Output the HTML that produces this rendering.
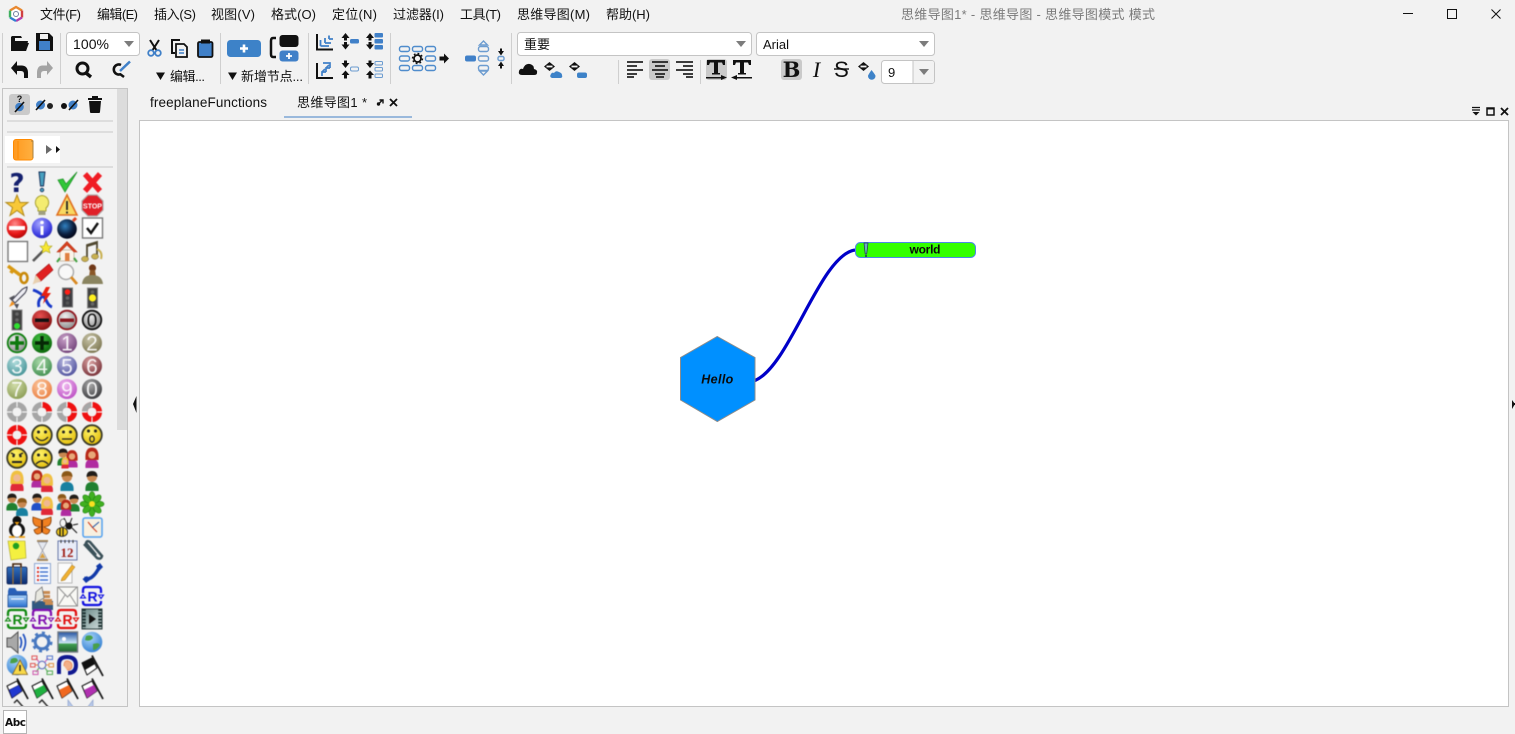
<!DOCTYPE html>
<html><head><meta charset="utf-8"><title>思维导图1*</title>
<style>
html,body{margin:0;padding:0;background:#f2f2f2;width:1515px;height:734px;overflow:hidden}
svg{position:absolute;left:0;top:0;display:block}
text{font-family:"Liberation Sans","Noto Sans CJK SC",sans-serif}
.m{font-size:13px;fill:#111}
.n{font-family:"Liberation Sans",sans-serif;font-size:21px;fill:#fff;text-anchor:middle;opacity:.9}
.soft{filter:blur(.4px)}
</style></head><body>
<svg width="1515" height="734" viewBox="0 0 1515 734" xmlns="http://www.w3.org/2000/svg">
<defs>
<radialGradient id="gRed" cx=".4" cy=".3" r=".8"><stop offset="0" stop-color="#ff8a8a"/><stop offset=".6" stop-color="#e81818"/><stop offset="1" stop-color="#a00000"/></radialGradient>
<radialGradient id="gBlue" cx=".4" cy=".3" r=".8"><stop offset="0" stop-color="#a8a8ff"/><stop offset=".7" stop-color="#3a3ae0"/><stop offset="1" stop-color="#20209a"/></radialGradient>
<radialGradient id="gDkRed" cx=".4" cy=".3" r=".8"><stop offset="0" stop-color="#e85050"/><stop offset="1" stop-color="#780808"/></radialGradient>
<radialGradient id="gGrey" cx=".4" cy=".3" r=".8"><stop offset="0" stop-color="#f0f0f0"/><stop offset="1" stop-color="#808080"/></radialGradient>
<radialGradient id="gGreen" cx=".4" cy=".3" r=".8"><stop offset="0" stop-color="#40c040"/><stop offset="1" stop-color="#045c04"/></radialGradient>
<radialGradient id="gYel" cx=".4" cy=".3" r=".8"><stop offset="0" stop-color="#fff46a"/><stop offset="1" stop-color="#e0b800"/></radialGradient>
<radialGradient id="gGlobe" cx=".4" cy=".3" r=".8"><stop offset="0" stop-color="#a8d4f8"/><stop offset="1" stop-color="#2a78d0"/></radialGradient>
<radialGradient id="gBomb" cx=".4" cy=".35" r=".7"><stop offset="0" stop-color="#3080c0"/><stop offset=".6" stop-color="#0c2040"/><stop offset="1" stop-color="#000010"/></radialGradient>
<radialGradient id="c1" cx=".4" cy=".3" r=".8"><stop offset="0" stop-color="#c8a0c8"/><stop offset="1" stop-color="#6a3a72"/></radialGradient>
<radialGradient id="c2" cx=".4" cy=".3" r=".8"><stop offset="0" stop-color="#c8c4a8"/><stop offset="1" stop-color="#76704a"/></radialGradient>
<radialGradient id="c3" cx=".4" cy=".3" r=".8"><stop offset="0" stop-color="#b0dcdc"/><stop offset="1" stop-color="#3e8e92"/></radialGradient>
<radialGradient id="c4" cx=".4" cy=".3" r=".8"><stop offset="0" stop-color="#a8d8a8"/><stop offset="1" stop-color="#3a8a4a"/></radialGradient>
<radialGradient id="c5" cx=".4" cy=".3" r=".8"><stop offset="0" stop-color="#b8b8e0"/><stop offset="1" stop-color="#484a98"/></radialGradient>
<radialGradient id="c6" cx=".4" cy=".3" r=".8"><stop offset="0" stop-color="#d8a0a0"/><stop offset="1" stop-color="#702830"/></radialGradient>
<radialGradient id="c7" cx=".4" cy=".3" r=".8"><stop offset="0" stop-color="#d0dca8"/><stop offset="1" stop-color="#86984e"/></radialGradient>
<radialGradient id="c8" cx=".4" cy=".3" r=".8"><stop offset="0" stop-color="#fcc8a0"/><stop offset="1" stop-color="#e87838"/></radialGradient>
<radialGradient id="c9" cx=".4" cy=".3" r=".8"><stop offset="0" stop-color="#f0b8f0"/><stop offset="1" stop-color="#b848c0"/></radialGradient>
<radialGradient id="c0" cx=".4" cy=".3" r=".8"><stop offset="0" stop-color="#a8a8a8"/><stop offset="1" stop-color="#303034"/></radialGradient>
<linearGradient id="gBrief" x1="0" y1="0" x2="0" y2="1"><stop offset="0" stop-color="#3070c0"/><stop offset="1" stop-color="#0c2c70"/></linearGradient>
<linearGradient id="gFold" x1="0" y1="0" x2="0" y2="1"><stop offset="0" stop-color="#a8d0f8"/><stop offset="1" stop-color="#2870d0"/></linearGradient>
<linearGradient id="gPic" x1="0" y1="0" x2="0" y2="1"><stop offset="0" stop-color="#2050a0"/><stop offset=".55" stop-color="#d0e8f8"/><stop offset=".6" stop-color="#40a050"/><stop offset="1" stop-color="#206030"/></linearGradient>
<linearGradient id="gFilm" x1="0" y1="0" x2="1" y2="1"><stop offset="0" stop-color="#6a8a88"/><stop offset="1" stop-color="#d0dcdc"/></linearGradient>
<linearGradient id="gBook" x1="0" y1="0" x2="1" y2="0"><stop offset="0" stop-color="#ff9a20"/><stop offset="1" stop-color="#ffb040"/></linearGradient>
<clipPath id="panel"><rect x="3" y="168" width="113" height="538"/></clipPath>

<g id="face"><circle r="9.8" fill="url(#gYel)" stroke="#3a3a28" stroke-width="1.8"/></g>
<g id="pers"><path d="M-6.500 10 Q-7.500 1 0 1 Q7.500 1 6.500 10Z" fill="#208030"/><circle cy="-4" r="5" fill="#c88850"/><path d="M-5.500-4 Q-5.500-10 0-10 Q5.500-10 5.500-4 Q2-6.500-5.500-4Z" fill="#201c18"/></g>
<g id="persT"><path d="M-6.500 10 Q-7.500 1 0 1 Q7.500 1 6.500 10Z" fill="#1880a0"/><circle cy="-4" r="5" fill="#c88850"/><path d="M-5.500-4 Q-5.500-10 0-10 Q5.500-10 5.500-4 Q2-6.500-5.500-4Z" fill="#8a5818"/></g>
<g id="persB"><path d="M-6.500 10 Q-7.500 1 0 1 Q7.500 1 6.500 10Z" fill="#2050c8"/><circle cy="-4" r="5" fill="#c88850"/><path d="M-5.500-4 Q-5.500-10 0-10 Q5.500-10 5.500-4 Q2-6.500-5.500-4Z" fill="#201c18"/></g>
<g id="womR"><path d="M-6.500 10 Q-7.500 1 0 1 Q7.500 1 6.500 10Z" fill="#b02ca0"/><path d="M-6.500 2 Q-7.500-10.500 0-10.500 Q7.500-10.500 6.500 2Z" fill="#b82818"/><circle cy="-3" r="3.800" fill="#e8a878"/></g>
<g id="womY"><path d="M-6.500 10 Q-7.500 1 0 1 Q7.500 1 6.500 10Z" fill="#e02838"/><path d="M-6.500 3 Q-7.500-10.500 0-10.500 Q7.500-10.500 6.500 3Z" fill="#f0c040"/><circle cy="-3" r="3.800" fill="#f0b890"/></g>
<g id="rShape" fill="none"><path d="M-6-9H6Q9-9 9-6V-3M9 5V6Q9 9 6 9H-6Q-9 9-9 6V5M-9-3V-6Q-9-9-6-9" stroke-width="2.300"/><path d="M-11.500 2H-6.500L-9-1.500Z M6.500-1H11.500L9 2.500Z" stroke-width="1.100"/></g>
<g id="flagF"><path d="M-10-2L0-7L5 3L-5 10Z" fill="#fff" stroke="#111" stroke-width="1" stroke-linejoin="round"/><path d="M0-9.500L11 11" stroke="#111" stroke-width="1.700"/></g>
</defs>

<!-- title bar -->
<g transform="translate(16,14)">
<path d="M0-7 L6-3.5 V3.5 L0 7 L-6 3.5 V-3.5Z" fill="#fff" stroke="none"/>
<path d="M-6-3.5 L0-7 L6-3.5" fill="none" stroke="#e88830" stroke-width="2.4"/>
<path d="M6-3.5 V3.5" stroke="#d04040" stroke-width="2.4"/>
<path d="M6 3.5 L0 7" stroke="#b040b0" stroke-width="2.4"/>
<path d="M0 7 L-6 3.5" stroke="#3080d0" stroke-width="2.4"/>
<path d="M-6 3.5 V-3.5" stroke="#40b060" stroke-width="2.4"/>
<circle r="2.5" fill="none" stroke="#7080a0" stroke-width="1"/>
</g>
<text class="m" x="40" y="19" textLength="41">文件(F)</text>
<text class="m" x="97" y="19" textLength="41">编辑(E)</text>
<text class="m" x="154" y="19" textLength="42">插入(S)</text>
<text class="m" x="211" y="19" textLength="44">视图(V)</text>
<text class="m" x="271" y="19" textLength="45">格式(O)</text>
<text class="m" x="332" y="19" textLength="45">定位(N)</text>
<text class="m" x="393" y="19" textLength="51">过滤器(I)</text>
<text class="m" x="460" y="19" textLength="41">工具(T)</text>
<text class="m" x="517" y="19" textLength="73">思维导图(M)</text>
<text class="m" x="606" y="19" textLength="44">帮助(H)</text>
<text x="901" y="19" font-size="13" fill="#7a7a7a" textLength="254">思维导图1* - 思维导图 - 思维导图模式 模式</text>
<path d="M1403 13.5H1413" stroke="#111" stroke-width="1"/>
<rect x="1447.5" y="9.5" width="9" height="9" fill="none" stroke="#111" stroke-width="1"/>
<path d="M1491.5 9.5L1500.5 18.5M1500.5 9.5L1491.5 18.5" stroke="#111" stroke-width="1"/>

<!-- separators -->
<g stroke="#cfcfcf" stroke-width="1">
<path d="M2.5 33V83M60.5 33V84M220.5 33V84M308.5 33V84M390.5 33V84M511.5 33V84M618.5 60V84M700.5 60V84"/>
</g>

<!-- open/save/undo/redo -->
<path d="M11 37V51H26L28 41H15V38H22L21 36H12Z" fill="#111"/><path d="M13 43H29L26 51H11Z" fill="#111"/>
<path d="M36 33H49L53 37V51H36Z" fill="#111"/><rect x="40" y="34" width="8" height="5" fill="#f2f2f2"/><rect x="39" y="41" width="11" height="9" fill="#4080c8"/>
<path d="M11 68L17 61V65.500H22Q28 66 28 73V78H24V74Q24 71 21 71H17V75Z" fill="#111"/>
<path d="M53 68L47 61V65.500H42Q37 66 37 73V78H41V74Q41 71 44 71H47V75Z" fill="#a4a4a4"/>
<!-- zoom combo -->
<rect x="66.500" y="32.500" width="73" height="23" rx="3" fill="#fff" stroke="#c4c4c4"/>
<text x="73" y="49" font-size="14" fill="#111" textLength="36">100%</text>
<path d="M124 41H134L129 47Z" fill="#7c7c7c"/>
<circle cx="82.500" cy="68.500" r="5.500" fill="none" stroke="#111" stroke-width="3"/><path d="M86 73L91 77" stroke="#111" stroke-width="3.400"/>
<path d="M121 65A5 5 0 1 0 121 74" fill="none" stroke="#111" stroke-width="2.600"/><path d="M120 71L130 61.500" stroke="#4080c8" stroke-width="2.500"/><path d="M120 74L124 77" stroke="#111" stroke-width="2.500"/>
<!-- cut copy paste -->
<path d="M150 40L157 51M159 40L152 51" stroke="#111" stroke-width="2"/><circle cx="151" cy="53" r="2.800" fill="none" stroke="#4080c8" stroke-width="1.800"/><circle cx="158" cy="53" r="2.800" fill="none" stroke="#4080c8" stroke-width="1.800"/>
<path d="M180 40H172V53H175" fill="none" stroke="#111" stroke-width="2"/><path d="M176 44H184L187 47V57H176Z" fill="#f2f2f2" stroke="#111" stroke-width="1.800"/><path d="M179 50H184M179 53H184" stroke="#4080c8" stroke-width="1.500"/>
<rect x="198" y="42" width="14.500" height="15" rx="1.500" fill="#4080c8" stroke="#111" stroke-width="1.800"/><rect x="201" y="39.500" width="9" height="4" fill="#111"/>
<path d="M156 72.500H165L160.500 80Z" fill="#111"/>
<text x="170" y="81" font-size="13" fill="#111" textLength="35">编辑...</text>
<!-- new node -->
<rect x="227" y="40" width="34" height="17" rx="3.500" fill="#3d82c8"/><path d="M244 44.500V52.500M240 48.500H248" stroke="#fff" stroke-width="2.600"/>
<path d="M276 38H273Q271 38 271 41V54Q271 57 273 57H276" fill="none" stroke="#111" stroke-width="2.500"/>
<rect x="279.500" y="35" width="19" height="12" rx="3" fill="#111"/><rect x="279.500" y="50.500" width="19" height="11" rx="3" fill="#4080c8"/><path d="M289 53V59M286 56H292" stroke="#fff" stroke-width="1.800"/>
<path d="M228 72.500H237L232.500 80Z" fill="#111"/>
<text x="241" y="81" font-size="13" fill="#111" textLength="62">新增节点...</text>
<!-- fold icons -->
<path d="M317 34V49.500H333" fill="none" stroke="#111" stroke-width="2"/>
<path d="M320.500 46V40M320.500 46H329M325 43V38M325 43H331M329 39V35.500M329 39H333" fill="none" stroke="#4080c8" stroke-width="1.800"/>
<path d="M317 63V78H333" fill="none" stroke="#111" stroke-width="2"/>
<path d="M322 76V72H326M322 72L325 69M326 72V68H330M326 68L329 65M330 68V63H323" fill="none" stroke="#4080c8" stroke-width="1.700"/>
<g fill="#111"><path d="M341.500 38L345.500 33L349.500 38H347V40.500H344V38ZM341.500 44.500L345.500 49.500L349.500 44.500H347V42H344V44.500Z"/>
<path d="M341.500 63L345.500 68L349.500 63H347V60.500H344V63ZM341.500 75L345.500 70.500L349.500 75H347V78.500H344V75Z"/>
<path d="M366 38L370 33L374 38H371.500V40.500H368.500V38ZM366 44.500L370 49.500L374 44.500H371.500V42H368.500V44.500Z"/>
<path d="M366 63L370 68L374 63H371.500V60.500H368.500V63ZM366 75L370 70.500L374 75H371.500V78.500H368.500V75Z"/></g>
<rect x="350" y="39" width="9" height="4.500" rx="1.500" fill="#4080c8"/>
<rect x="350.500" y="67" width="8" height="4" rx="1.500" fill="none" stroke="#6c9cd0"/>
<g fill="#4080c8"><rect x="374.500" y="33" width="8.500" height="4.500" rx="1"/><rect x="374.500" y="39" width="8.500" height="4.500" rx="1"/><rect x="374.500" y="45" width="8.500" height="4.500" rx="1"/></g>
<g fill="none" stroke="#6c9cd0"><rect x="375" y="61.500" width="7.500" height="3.500" rx="1"/><rect x="375" y="67.500" width="7.500" height="3.500" rx="1"/><rect x="375" y="74" width="7.500" height="3.500" rx="1"/></g>
<!-- layout -->
<g fill="none" stroke="#4f8ccc" stroke-width="1.400">
<rect x="399.500" y="46.500" width="10" height="5" rx="2"/><rect x="412.500" y="46.500" width="10" height="5" rx="2"/><rect x="425.500" y="46.500" width="10" height="5" rx="2"/>
<rect x="399.500" y="56" width="10" height="5" rx="2"/><rect x="425.500" y="56" width="10" height="5" rx="2"/>
<rect x="399.500" y="65.500" width="10" height="5" rx="2"/><rect x="412.500" y="65.500" width="10" height="5" rx="2"/><rect x="425.500" y="65.500" width="10" height="5" rx="2"/>
</g>
<circle cx="417.500" cy="58.500" r="3.500" fill="none" stroke="#111" stroke-width="1.800"/><circle cx="417.500" cy="58.500" r="5" fill="none" stroke="#111" stroke-width="1.400" stroke-dasharray="1.800 2.100"/>
<path d="M439.500 56.500H444V53.500L449 58.500L444 63.500V60.500H439.500Z" fill="#111"/>
<rect x="465" y="55.500" width="11" height="6" rx="2" fill="#4080c8"/>
<g fill="none" stroke="#6c9cd0" stroke-width="1.400"><rect x="478.500" y="46.500" width="10" height="5" rx="2"/><rect x="478.500" y="56" width="10" height="5" rx="2"/><rect x="478.500" y="65.500" width="10" height="5" rx="2"/><path d="M479.500 45L483.500 41L487.500 45Z"/><path d="M479.500 71L483.500 75L487.500 71Z"/><rect x="498" y="56.500" width="6" height="4" rx="1.500"/></g>
<path d="M498 51H500V48.500H502V51H504L501 55.500ZM498 66L501 61.500L504 66H502V68.500H500V66Z" fill="#111"/>
<!-- format combos -->
<rect x="517.500" y="32.500" width="234" height="23" rx="3" fill="#fff" stroke="#c4c4c4"/>
<text x="524" y="49" font-size="13" fill="#111">重要</text>
<path d="M736 41H746L741 47Z" fill="#7c7c7c"/>
<rect x="756.500" y="32.500" width="178" height="23" rx="3" fill="#fff" stroke="#c4c4c4"/>
<text x="763" y="49" font-size="13" fill="#111">Arial</text>
<path d="M919 41H929L924 47Z" fill="#7c7c7c"/>
<path d="M522 75Q518 75 519 71Q520 68 523 69Q525 63 530 64Q534 65 534 69Q538 70 537 73Q537 75 534 75Z" fill="#111"/>
<path d="M549.500 62L555 66.500L549.500 71L544 66.500Z" fill="#111"/><path d="M546.500 66.500H552.500" stroke="#f2f2f2" stroke-width="1.800"/>
<path d="M552 78Q549 77 551 74Q552 72 554 73Q556 70 559 72Q562 73 562 75Q563 78 560 78Z" fill="#3d82c8"/>
<path d="M574.500 62L580 66.500L574.500 71L569 66.500Z" fill="#111"/><path d="M571.500 66.500H577.500" stroke="#f2f2f2" stroke-width="1.800"/>
<rect x="577" y="72.500" width="10" height="5.500" rx="2" fill="#3d82c8"/>
<path d="M627 62H643M627 66H637M627 70H643M627 74H637M627 77H634" stroke="#222" stroke-width="1.700"/>
<rect x="649" y="59" width="21" height="21" rx="3" fill="#cacaca"/>
<path d="M652 62H668M655 66H665M652 70H668M655 74H665M656 77H664" stroke="#222" stroke-width="1.700"/>
<path d="M676 62H693M683 66H693M676 70H693M683 74H693M686 77H693" stroke="#222" stroke-width="1.700"/>
<rect x="706" y="59" width="21" height="21" rx="3" fill="#cacaca"/>
<path d="M707 60H725V65H723L722 62.500H718V73H720V74.500H712V73H714V62.500H710L709 65H707Z" fill="#111"/>
<path d="M706 77H721V75L727 77.500L721 80V78.500H706Z" fill="#111"/>
<path d="M733 60H751V65H749L748 62.500H744V73H746V74.500H738V73H740V62.500H736L735 65H733Z" fill="#111"/>
<path d="M752 77H737V75L731 77.500L737 80V78.500H752Z" fill="#111"/>
<rect x="781" y="59" width="21" height="21" rx="3" fill="#cacaca"/>
<text x="791.500" y="77" font-size="21" font-weight="700" text-anchor="middle" style="font-family:'DejaVu Serif','Liberation Serif',serif" fill="#111">B</text>
<text x="816.500" y="77" font-size="22" font-style="italic" text-anchor="middle" style="font-family:'Liberation Serif',serif" fill="#111">I</text>
<text x="841.500" y="77" font-size="22" text-anchor="middle" style="font-family:'Liberation Sans',sans-serif" fill="#111">S</text><path d="M834 69H849" stroke="#111" stroke-width="1.400"/>
<path d="M863.500 62L869 66.500L863.500 71L858 66.500Z" fill="#111"/><path d="M860.500 66.500H866.500" stroke="#f2f2f2" stroke-width="1.800"/>
<path d="M871.500 70Q875.500 75 875.500 76A3.700 3.700 0 0 1 868 76Q868 75 871.500 70Z" fill="#3d82c8"/>
<rect x="881.500" y="60.500" width="53" height="23" rx="3" fill="#fff" stroke="#c4c4c4"/><rect x="913" y="61" width="21" height="22" rx="2" fill="#f2f2f2"/><path d="M913 60.500V83.500" stroke="#c4c4c4"/>
<text x="888" y="77" font-size="13" fill="#111">9</text>
<path d="M919 69H929L924 75Z" fill="#7c7c7c"/>

<!-- tabs -->
<text x="150" y="107" font-size="13.500" fill="#111" textLength="117">freeplaneFunctions</text>
<text x="297" y="107" font-size="13" fill="#111" textLength="70">思维导图1 *</text>
<path d="M378 104.500L382 100.500M379.500 100H383V103.500" stroke="#111" stroke-width="1.400" fill="none"/><circle cx="378.500" cy="104" r="1.700" fill="#111"/>
<path d="M390 99L397 106M397 99L390 106" stroke="#111" stroke-width="1.800"/>
<rect x="284" y="116" width="128" height="2" fill="#9ab9dc"/>
<!-- dock icons -->
<path d="M1472 107.500H1480M1472 110H1480" stroke="#111" stroke-width="1.300"/><path d="M1472.500 112H1479.500L1476 115.500Z" fill="#111"/>
<rect x="1487" y="108" width="7" height="7" fill="none" stroke="#111" stroke-width="1.500"/><path d="M1487 108.500H1494" stroke="#111" stroke-width="2"/>
<path d="M1501 108L1508 115M1508 108L1501 115" stroke="#111" stroke-width="1.800"/>

<!-- canvas -->
<rect x="139.500" y="120.500" width="1369" height="586" fill="#fff" stroke="#c4c4c4"/>
<path d="M755 380.500C790 366 820 255 855 250" fill="none" stroke="#0000c8" stroke-width="3.200"/>
<path d="M717.300 336.500L755 357.500V400L717.300 421.500L680.500 400V357.500Z" fill="#0090ff" stroke="#8c8c8c" stroke-width="1"/>
<text x="717.300" y="383.500" font-size="12.500" font-weight="700" font-style="italic" text-anchor="middle" fill="#0a0a0a" textLength="32">Hello</text>
<rect x="855.500" y="242.500" width="120" height="15" rx="5" fill="#33ff00" stroke="#4c88e8" stroke-width="1"/>
<text x="925" y="253.500" font-size="12" font-weight="700" text-anchor="middle" fill="#0a0a0a" textLength="31">world</text>
<path d="M864 243H868L866.700 254H865.200Z" fill="#6ab0c0" stroke="#203050" stroke-width=".7"/><circle cx="866" cy="256" r="1" fill="#203050"/>

<!-- collapse arrows -->
<path d="M136.500 396L133 404L136.500 413Z" fill="#111"/><path d="M1512 400L1515 404L1512 409Z" fill="#111"/><rect x="1513" y="403" width="2" height="2" fill="#111"/>

<!-- left panel -->
<rect x="2.500" y="88.500" width="125" height="618" fill="#f2f2f2" stroke="#c4c4c4"/>
<rect x="117" y="89" width="10" height="341" fill="#dcdcdc"/>
<rect x="9" y="94" width="21" height="21" rx="3" fill="#cacaca"/>
<text x="19.500" y="102" font-size="9" font-weight="700" text-anchor="middle" fill="#111">?</text>
<circle cx="19.500" cy="107" r="4.300" fill="#4080c8"/><path d="M15 112L24 102" stroke="#111" stroke-width="1.600"/>
<circle cx="40.500" cy="105" r="4.500" fill="#4080c8"/><path d="M36 110L45 100" stroke="#111" stroke-width="1.600"/><circle cx="50" cy="106" r="3" fill="#222"/>
<circle cx="73" cy="105" r="4.500" fill="#4080c8"/><path d="M69 110L78 100" stroke="#111" stroke-width="1.600"/><circle cx="64" cy="106" r="3" fill="#111"/>
<path d="M88 98H102V100H88ZM92 96H98V98H92ZM89 101H101L100 112Q100 113 99 113H91Q90 113 90 112Z" fill="#111"/>
<path d="M7 121H113M7 132H113M7 167H113" stroke="#c8c8c8" stroke-width="1"/>
<rect x="5" y="136" width="55" height="27" fill="#fff"/>
<rect x="13.500" y="139.500" width="19.500" height="20.500" rx="2.500" fill="url(#gBook)" stroke="#ff8a00"/><path d="M18 141V159" stroke="#ff8a00" stroke-width="1"/><path d="M31 141H33V158" fill="none" stroke="#a88040"/>
<path d="M46 145L52 149.500L46 154Z" fill="#6a6a6a"/><path d="M56 146L60 149.500L56 153Z" fill="#111"/>

<g clip-path="url(#panel)"><g class="soft">
<!-- row 0 -->
<text x="17" y="192" font-size="26" font-weight="700" text-anchor="middle" style="font-family:'DejaVu Sans',sans-serif" fill="#14206e">?</text>
<path d="M39 172H45L43.500 186H40.500Z" fill="#48a0c0" stroke="#14305a" stroke-width="1"/><circle cx="42" cy="190" r="1.800" fill="#48a0c0" stroke="#14305a" stroke-width=".8"/>
<path d="M58 180L65 192L77 172L66 184L63 179Z" fill="#30c838" stroke="#209028" stroke-width=".8"/>
<path d="M85 174L100 191M100 174L85 191" stroke="#f01c24" stroke-width="5.500"/>
<!-- row 1 -->
<path d="M17 195L20 202.500H28L21.500 207.500L24 215.500L17 210.500L10 215.500L12.500 207.500L6 202.500H14Z" fill="#f8c838" stroke="#b08818"/>
<path d="M42 195.500A7 7 0 0 1 46 208V211H38V208A7 7 0 0 1 42 195.500Z" fill="#f4ec70" stroke="#a8a030"/><rect x="38.500" y="211" width="7" height="4" fill="#a0a080"/>
<path d="M67 195L77 215H57Z" fill="#f8d860" stroke="#e07020" stroke-width="1.600"/><path d="M67 201V210M67 211.500V213.500" stroke="#222" stroke-width="1.800"/>
<path d="M88 195H97L103 201V210L97 216H88L82 210V201Z" fill="#e02028" stroke="#b0a8a8" stroke-width="1.200"/><text x="92.500" y="208.500" font-size="7" font-weight="700" text-anchor="middle" fill="#fff">STOP</text>
<!-- row 2 -->
<circle cx="17" cy="228" r="10.300" fill="url(#gRed)"/><rect x="9" y="226" width="16" height="4" fill="#fff"/>
<circle cx="42" cy="228" r="10.300" fill="url(#gBlue)"/><rect x="40.500" y="226" width="3" height="9" fill="#fff"/><circle cx="42" cy="222.500" r="1.800" fill="#fff"/>
<circle cx="67" cy="229" r="9.800" fill="url(#gBomb)"/><path d="M73 221L76 218" stroke="#e04020" stroke-width="3"/>
<rect x="82.500" y="218" width="20" height="20" fill="#fff" stroke="#707070" stroke-width="1.300"/><path d="M87 228L91 233L98 223" fill="none" stroke="#111" stroke-width="2.400"/>
<!-- row 3 -->
<rect x="8" y="241.500" width="19.500" height="20" fill="#fff" stroke="#707070" stroke-width="1.300"/>
<path d="M33 261L45 249" stroke="#555" stroke-width="2.600"/><path d="M46 241L48 246H52L49 249L50 253L46 251L42 253L43 249L40 246H44Z" fill="#f8e830" stroke="#a8a020" stroke-width=".6"/>
<rect x="60" y="250" width="14" height="11" fill="#fbf4ea" stroke="#b8a890" stroke-width=".7"/><path d="M67 241.500L57 252H60L67 245L74 252H77Z" fill="#d84020" stroke="#b83010" stroke-width=".6"/><rect x="65" y="253" width="4.500" height="8" fill="#e08040"/><path d="M57 262L60 258M77 262L74 258" stroke="#40a040" stroke-width="2"/>
<path d="M87 259V245L97 242V256" fill="none" stroke="#504830" stroke-width="1.800"/><path d="M87 246L97 243" stroke="#504830" stroke-width="2"/><ellipse cx="85" cy="259" rx="3.500" ry="2.700" fill="#c8b050" stroke="#706030" stroke-width=".5"/><ellipse cx="95" cy="256.500" rx="3.500" ry="2.700" fill="#c8b050" stroke="#706030" stroke-width=".5"/><path d="M97 249Q103 252 101 259" fill="none" stroke="#c8b050" stroke-width="2"/>
<!-- row 4 -->
<path d="M8 266L20 275" stroke="#d89810" stroke-width="3.500"/><path d="M10 271L13 273" stroke="#d89810" stroke-width="2.500"/><ellipse cx="24" cy="278" rx="3.500" ry="5" fill="none" stroke="#c88808" stroke-width="2.600"/>
<path d="M34 283L36 275L49 264L53 270L41 281Z" fill="#e02020" stroke="#a01010" stroke-width=".6"/><path d="M32.500 284.500L36 275L41 281Z" fill="#e8d0b0"/>
<circle cx="66" cy="272" r="7.500" fill="#f8f8f8" stroke="#a8a8a8" stroke-width="1.400"/><path d="M71 277L77 284" stroke="#d88820" stroke-width="2.800"/>
<circle cx="92.500" cy="268" r="3.600" fill="#703818"/><path d="M90 270L89 277H96L95 270Z" fill="#8a5828"/><path d="M82 284Q83 275 92 275Q102 275 103 284Z" fill="#8a8460"/>
<!-- row 5 -->
<path d="M12 300L22 289.500Q25 287.500 27 287Q27 290 25 293L15 303Z" fill="#eeeef4" stroke="#404050" stroke-width="1.100"/><path d="M9 307L12 301L15 304Z" fill="#f09020"/><path d="M9 298L15 295L12 301ZM19 304L17 309L14 304Z" fill="#505058"/>
<path d="M33 290Q43 293 47 302Q49 306 52 307" fill="none" stroke="#1838c8" stroke-width="3"/><path d="M43 296Q37 300 39 307" fill="none" stroke="#1838c8" stroke-width="2.800"/><path d="M46 287L41 296H45L43 304L51 293H47L50 287Z" fill="#e82010"/>
<rect x="62.500" y="288" width="10" height="19" fill="#3c3c40" stroke="#777"/><circle cx="67.500" cy="292" r="2.800" fill="#ff2018"/><circle cx="67.500" cy="298" r="1.800" fill="#666"/><circle cx="67.500" cy="303" r="1.800" fill="#555"/>
<rect x="87.500" y="288" width="10" height="20" fill="#404040" stroke="#888"/><circle cx="92.500" cy="292" r="1.800" fill="#666"/><circle cx="92.500" cy="298" r="3.600" fill="#fff020"/><circle cx="92.500" cy="304" r="1.800" fill="#666"/>
<!-- row 6 -->
<rect x="12" y="310" width="10" height="20" fill="#404040" stroke="#888"/><circle cx="17" cy="314" r="1.800" fill="#666"/><circle cx="17" cy="320" r="1.800" fill="#666"/><circle cx="17" cy="326" r="3" fill="#30e030"/>
<circle cx="42" cy="320" r="10" fill="url(#gDkRed)"/><rect x="35" y="318.500" width="14" height="3.500" fill="#111"/>
<circle cx="67" cy="320" r="9.300" fill="url(#gGrey)" stroke="#901820" stroke-width="1.800"/><rect x="60" y="318.500" width="14" height="3.500" fill="#8a1820"/>
<circle cx="92" cy="320" r="9.300" fill="url(#gGrey)" stroke="#111" stroke-width="1.800"/><text x="92" y="327" font-size="19" text-anchor="middle" fill="#111">0</text>
<!-- row 7 -->
<circle cx="17" cy="343" r="9.300" fill="url(#gGrey)" stroke="#108010" stroke-width="1.800"/><path d="M17 336V350M10 343H24" stroke="#0c780c" stroke-width="3.400"/>
<circle cx="42" cy="343" r="10" fill="url(#gGreen)"/><path d="M42 336V350M35 343H49" stroke="#062806" stroke-width="3.400"/>
<circle cx="67" cy="343" r="10" fill="url(#c1)"/><text class="n" x="67" y="350.500">1</text>
<circle cx="92" cy="343" r="10" fill="url(#c2)"/><text class="n" x="92" y="350.500">2</text>
<!-- row 8 -->
<circle cx="17" cy="366" r="10" fill="url(#c3)"/><text class="n" x="17" y="373.500">3</text>
<circle cx="42" cy="366" r="10" fill="url(#c4)"/><text class="n" x="42" y="373.500">4</text>
<circle cx="67" cy="366" r="10" fill="url(#c5)"/><text class="n" x="67" y="373.500">5</text>
<circle cx="92" cy="366" r="10" fill="url(#c6)"/><text class="n" x="92" y="373.500">6</text>
<!-- row 9 -->
<circle cx="17" cy="389" r="10" fill="url(#c7)"/><text class="n" x="17" y="396.500">7</text>
<circle cx="42" cy="389" r="10" fill="url(#c8)"/><text class="n" x="42" y="396.500">8</text>
<circle cx="67" cy="389" r="10" fill="url(#c9)"/><text class="n" x="67" y="396.500">9</text>
<circle cx="92" cy="389" r="10" fill="url(#c0)"/><text class="n" x="92" y="396.500">0</text>
<!-- row 10 rings -->
<g fill="none" stroke-width="5.500">
<circle cx="17" cy="412" r="7.300" stroke="#a6a6a6"/>
<circle cx="42" cy="412" r="7.300" stroke="#a6a6a6"/><path d="M42 404.700A7.300 7.300 0 0 1 49.300 412" stroke="#f01010"/>
<circle cx="67" cy="412" r="7.300" stroke="#a6a6a6"/><path d="M67 404.700A7.300 7.300 0 0 1 67 419.300" stroke="#f01010"/>
<circle cx="92" cy="412" r="7.300" stroke="#f01010"/><path d="M92 404.700A7.300 7.300 0 0 0 84.700 412" stroke="#a6a6a6"/>
<circle cx="17" cy="435" r="7.300" stroke="#f01010"/>
</g>
<g stroke="#f2f2f2" stroke-width="1.200">
<path d="M17 402V407M17 417V422M7 412H12M22 412H27M42 402V407M42 417V422M32 412H37M47 412H52M67 402V407M67 417V422M57 412H62M72 412H77M92 402V407M92 417V422M82 412H87M97 412H102M17 425V430M17 440V445M7 435H12M22 435H27"/>
</g>
<!-- faces -->
<use href="#face" x="42" y="435"/><circle cx="38.500" cy="432" r="1.500" fill="#222"/><circle cx="45.500" cy="432" r="1.500" fill="#222"/><path d="M36 437Q42 444 48 437" fill="none" stroke="#222" stroke-width="1.300"/>
<use href="#face" x="67" y="435"/><circle cx="63.500" cy="432" r="1.500" fill="#222"/><circle cx="70.500" cy="432" r="1.500" fill="#222"/><path d="M62 439H72" stroke="#222" stroke-width="1.300"/>
<use href="#face" x="92" y="435"/><circle cx="88.500" cy="431" r="1.500" fill="#222"/><circle cx="95.500" cy="431" r="1.500" fill="#222"/><ellipse cx="92" cy="439" rx="2.200" ry="3" fill="none" stroke="#222" stroke-width="1.200"/>
<!-- row 12 -->
<use href="#face" x="17" y="458"/><path d="M11 453L15 455M23 453L19 455" stroke="#222" stroke-width="1.300"/><circle cx="13.500" cy="456" r="1.300" fill="#222"/><circle cx="20.500" cy="456" r="1.300" fill="#222"/><path d="M12 462H22" stroke="#222" stroke-width="2"/>
<use href="#face" x="42" y="458"/><circle cx="38.500" cy="455" r="1.500" fill="#222"/><circle cx="45.500" cy="455" r="1.500" fill="#222"/><path d="M36 464Q42 458 48 464" fill="none" stroke="#222" stroke-width="1.300"/>
<use href="#pers" transform="translate(63,457) scale(.85)"/><use href="#womR" transform="translate(72,459) scale(.85)"/><use href="#womY" transform="translate(65,463) scale(.55)"/>
<use href="#womR" x="92" y="458"/>
<!-- row 13 -->
<use href="#womY" x="17" y="481"/>
<use href="#womR" transform="translate(37,479) scale(.85)"/><use href="#womY" transform="translate(47,483) scale(.9)"/>
<use href="#persT" x="67" y="481"/>
<use href="#pers" x="92" y="481"/>
<!-- row 14 -->
<use href="#pers" transform="translate(12,502) scale(.85)"/><use href="#persT" transform="translate(22,507) scale(.9)"/>
<use href="#persB" transform="translate(37,502) scale(.85)"/><use href="#womY" transform="translate(47,506) scale(.9)"/>
<use href="#persT" transform="translate(62,502) scale(.8)"/><use href="#pers" transform="translate(74,503) scale(.85)"/><use href="#womR" transform="translate(66,508) scale(.8)"/>
<g fill="#40b020" stroke="#208010" stroke-width=".6"><ellipse cx="92" cy="497" rx="3" ry="5.500"/><ellipse cx="92" cy="511" rx="3" ry="5.500"/><ellipse cx="85.500" cy="504" rx="5.500" ry="3"/><ellipse cx="98.500" cy="504" rx="5.500" ry="3"/><ellipse cx="87" cy="499" rx="3" ry="5" transform="rotate(-45 87 499)"/><ellipse cx="97" cy="499" rx="3" ry="5" transform="rotate(45 97 499)"/><ellipse cx="87" cy="509" rx="3" ry="5" transform="rotate(45 87 509)"/><ellipse cx="97" cy="509" rx="3" ry="5" transform="rotate(-45 97 509)"/></g><circle cx="92" cy="504" r="3" fill="#f8e020"/>
<!-- row 15 -->
<ellipse cx="17" cy="530" rx="8" ry="7.500" fill="#111"/><ellipse cx="17" cy="531" rx="5" ry="6" fill="#fff"/><circle cx="17" cy="520.500" r="4.500" fill="#111"/><path d="M14.500 522H19.500L17 525Z" fill="#f0a010"/><path d="M9 537H15M19 537H25" stroke="#f0a010" stroke-width="1.800"/>
<path d="M42 520L33 517Q32 524 36 526L40 527L34 530Q36 537 42 532Q48 537 50 530L44 527L48 526Q52 524 51 517Z" fill="#f08020" stroke="#8a4008" stroke-width=".8"/><path d="M42 520V532" stroke="#401808" stroke-width="1.400"/>
<ellipse cx="62" cy="532" rx="5.500" ry="4.500" fill="#f0c820" stroke="#111" stroke-width=".8"/><path d="M60 528V536M63 528V536" stroke="#111" stroke-width="1.200"/><circle cx="69" cy="526" r="3.500" fill="#111"/><path d="M64 518Q66 522 67 524M72 518L70 523M72 528L77 533M73 525L78 524" stroke="#111" stroke-width="1"/><ellipse cx="63" cy="523" rx="3" ry="4" fill="#f4f4f4" stroke="#222" stroke-width=".6"/>
<rect x="83" y="518" width="19" height="19" rx="2" fill="#f8f0e0" stroke="#50a0f0" stroke-width="1.500"/><path d="M92.500 527.500L88 522M92.500 527.500L97 532" stroke="#d04020" stroke-width="1.100"/><path d="M92.500 527.500L99 522" stroke="#2050a0" stroke-width="1"/>
<!-- row 16 -->
<path d="M8 541L25 541L26 558L11 560Z" fill="#f4f040" stroke="#a8a020" stroke-width=".6"/><circle cx="16" cy="546" r="3.200" fill="#20a020"/>
<path d="M37 541H48M37 560H48" stroke="#a08050" stroke-width="1.800"/><path d="M38 542H47L42.500 550.500L47 559H38L42.500 550.500Z" fill="#e4e8f0" stroke="#90909a" stroke-width=".7"/><path d="M39.500 558H45.500L42.500 553Z" fill="#d8a040"/>
<rect x="58" y="541" width="19" height="19" fill="#e8ecf8" stroke="#6878a8"/><path d="M61 540V543M65 540V543M69 540V543M73 540V543" stroke="#333" stroke-width="1"/><text x="67" y="557" font-size="13" font-weight="700" text-anchor="middle" fill="#a02018" style="font-family:'Liberation Serif',serif">12</text>
<path d="M84 544L97 558Q101 560 102 556L90 542Q87 540 86 543L96 555" fill="none" stroke="#3a5058" stroke-width="2.500"/>
<!-- row 17 -->
<rect x="7" y="567" width="20" height="17" rx="1.500" fill="url(#gBrief)" stroke="#0a1c50" stroke-width=".8"/><path d="M13 567V564H21V567" fill="none" stroke="#402008" stroke-width="1.600"/><path d="M13 567V584M21 567V584" stroke="#a07030" stroke-width="1.200"/>
<rect x="34.500" y="563.500" width="16" height="20" fill="#f4f8ff" stroke="#90a8d0"/><g stroke="#2860c8" stroke-width="1.300"><path d="M40 568H48M40 572H48M40 576H48M40 580H48"/></g><g fill="#e03020"><rect x="37" y="567" width="2" height="2"/><rect x="37" y="571" width="2" height="2"/><rect x="37" y="575" width="2" height="2"/><rect x="37" y="579" width="2" height="2"/></g>
<rect x="58" y="563" width="14" height="20" fill="#fbfbfb" stroke="#b8b8b8"/><path d="M62 578L72 565L75 567L65 580L61 581Z" fill="#f0b030" stroke="#a07018" stroke-width=".5"/>
<path d="M84 578Q92 582 100 566" fill="none" stroke="#1038a8" stroke-width="3.500"/><path d="M82.500 579L87 576L90 580L86 583ZM96 566L100 563L103 567L99 571Z" fill="#1038a8"/>
<!-- row 18 -->
<path d="M8 591V604H27V591H17L15 588H9Z" fill="#2860b8"/><path d="M8 595H27V607H8Z" fill="url(#gFold)" stroke="#184890" stroke-width=".8"/><path d="M11 599H24" stroke="#fff" stroke-width="1"/>
<rect x="32" y="601" width="21" height="9" fill="#305880"/><g fill="#c88a50"><rect x="43" y="599" width="9" height="3"/><rect x="42" y="595" width="8" height="3"/><rect x="43" y="591" width="7" height="3"/><rect x="45" y="602" width="8" height="3"/></g><path d="M36 592L42 587L44 598L35 603Z" fill="#e8e8e0" stroke="#707070" stroke-width=".8"/>
<rect x="57.500" y="587" width="20" height="19" fill="#f8f8f4" stroke="#909090"/><path d="M58 587L67.500 597L77 587M58 606L65 595M77 606L70 595" fill="none" stroke="#909090"/>
<g stroke="#1010e0"><use href="#rShape" x="92" y="596"/></g><text x="92.500" y="601.500" font-size="14" font-weight="700" text-anchor="middle" fill="#1010e0">R</text>
<!-- row 19 -->
<g stroke="#108810"><use href="#rShape" x="17" y="619"/></g><text x="17.500" y="624.500" font-size="14" font-weight="700" text-anchor="middle" fill="#108810">R</text>
<g stroke="#8010b0"><use href="#rShape" x="42" y="619"/></g><text x="42.500" y="624.500" font-size="14" font-weight="700" text-anchor="middle" fill="#8010b0">R</text>
<g stroke="#e01010"><use href="#rShape" x="67" y="619"/></g><text x="67.500" y="624.500" font-size="14" font-weight="700" text-anchor="middle" fill="#e01010">R</text>
<rect x="82" y="609" width="20" height="20" fill="url(#gFilm)" stroke="#2c4040"/><path d="M84 609V629M100 609V629" stroke="#1c3030" stroke-width="3.500" stroke-dasharray="2 1.200"/><path d="M89 614L96 619L89 624Z" fill="#111"/>
<!-- row 20 -->
<path d="M7 638H11L18 632V653L11 647H7Z" fill="#a8a8a8" stroke="#505050"/><path d="M20 637Q23 642 20 648M23 634Q28 642 23 651" fill="none" stroke="#2050c0" stroke-width="1.700"/>
<circle cx="42" cy="642" r="6.800" fill="none" stroke="#4878c0" stroke-width="3"/><circle cx="42" cy="642" r="9" fill="none" stroke="#4878c0" stroke-width="3" stroke-dasharray="3 4"/><circle cx="42" cy="642" r="3.500" fill="#f2f2f2"/>
<rect x="58" y="632" width="19.500" height="20" fill="url(#gPic)" stroke="#707880" stroke-width="1.400"/><circle cx="64" cy="639" r="2" fill="#fff"/>
<circle cx="92" cy="642" r="10.300" fill="url(#gGlobe)"/><path d="M86 636Q92 634 93 638Q90 642 85 640ZM93 644Q99 642 100 645Q97 650 93 650Z" fill="#48a048"/>
<!-- row 21 -->
<circle cx="17" cy="665" r="10.300" fill="url(#gGlobe)"/><path d="M11 659Q17 656 18 661Q15 664 10 663Z" fill="#48a048"/><path d="M20 660L27.500 674.500H12.500Z" fill="#f8d848" stroke="#806020" stroke-width=".8"/><path d="M20 665V671" stroke="#222" stroke-width="1.500"/>
<g fill="none" stroke-width="1.100"><circle cx="42" cy="665" r="3.800" stroke="#6070c0"/><path d="M39 662L36 658M45 662L48 658" stroke="#d060c0"/><path d="M38 665H35M46 665H49" stroke="#e08840"/><path d="M39 668L36 672M45 668L48 672" stroke="#60b060"/><rect x="32" y="656" width="5" height="3.500" stroke="#e06060"/><rect x="47" y="656" width="5.500" height="3.500" stroke="#6080d0"/><rect x="30.500" y="663.500" width="4.500" height="3.500" stroke="#e06060"/><rect x="49" y="663.500" width="4.500" height="3.500" stroke="#e09850"/><rect x="33" y="671" width="5" height="3.500" stroke="#d060b0"/><rect x="47" y="671" width="5.500" height="3.500" stroke="#60b060"/></g>
<path d="M59 674V664Q59 657 67 657Q76 657 76 665Q76 673 68 673" fill="none" stroke="#101890" stroke-width="4"/><path d="M64 666Q64 660 68 661Q72 662 72 666Q72 670 67 670" fill="#f4b088" stroke="#f09060" stroke-width="1"/>
<use href="#flagF" x="92" y="665"/><path d="M82 663L92 658L95 664L85 670Z" fill="#111"/>
<!-- row 22 flags -->
<use href="#flagF" x="17" y="688"/><path d="M9 690L19 685L22 691L12 698Z" fill="#2038d0" stroke="#101060" stroke-width=".5"/>
<use href="#flagF" x="42" y="688"/><path d="M34 690L44 685L47 691L37 698Z" fill="#20b040"/>
<use href="#flagF" x="67" y="688"/><path d="M59 690L69 685L72 691L62 698Z" fill="#f06820"/>
<use href="#flagF" x="92" y="688"/><path d="M84 690L94 685L97 691L87 698Z" fill="#b030b0"/>
<!-- row 23 partial -->
<path d="M14 703L17 700L24 708M39 703L42 700L49 708" fill="none" stroke="#222" stroke-width="1.400"/>
<path d="M68 700V708H74Z" fill="#b8c8e8" stroke="#8098c8" stroke-width=".6"/><path d="M93 700V708H87Z" fill="#b8c8e8" stroke="#8098c8" stroke-width=".6"/>
</g></g>

<!-- bottom Abc -->
<rect x="3.500" y="710.500" width="23" height="23" fill="#fff" stroke="#b4b4b4"/>
<text x="15.500" y="726" font-size="10.500" font-weight="700" text-anchor="middle" style="font-family:'DejaVu Sans',sans-serif" fill="#111" textLength="21">Abc</text>
</svg>
</body></html>
